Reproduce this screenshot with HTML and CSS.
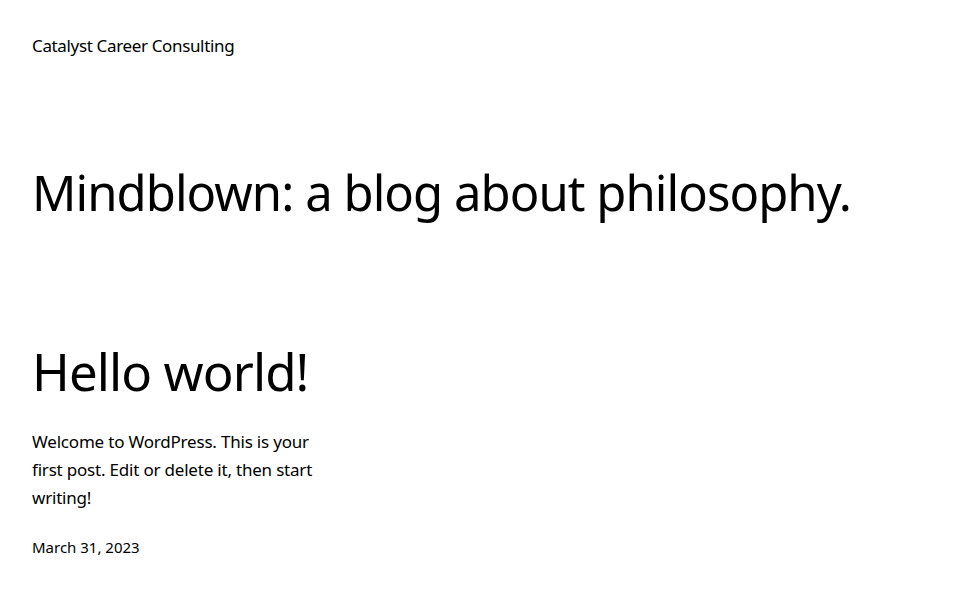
FILE: index.html
```html
<!DOCTYPE html>
<html lang="en">
<head>
<meta charset="utf-8">
<title>Catalyst Career Consulting</title>
<link rel="stylesheet" href="styles.css">
</head>
<body>
<header class="site-header">
  <p class="site-title">Catalyst Career Consulting</p>
</header>
<main class="content">
  <h1 class="page-title">Mindblown: a blog about philosophy.</h1>
  <div class="post-grid">
    <article class="post">
      <h2 class="post-title">Hello world!</h2>
      <p class="post-excerpt">Welcome to WordPress. This is your first post. Edit or delete it, then start writing!</p>
      <p class="post-date">March 31, 2023</p>
    </article>
    <div></div>
    <div></div>
  </div>
</main>
</body>
</html>
```
FILE: styles.css
```css
html, body {
  margin: 0;
  padding: 0;
  background: #ffffff;
  color: #000000;
  font-family: "Noto Sans", sans-serif;
}
.site-header {
  padding: 33px 32px 0;
}
.site-title {
  margin: 0;
  font-size: 17px;
  line-height: 26px;
  letter-spacing: -0.35px;
}
.content {
  padding: 0 32px;
}
.page-title {
  margin: 98px 0 0;
  font-weight: 400;
  font-size: 49px;
  line-height: 70px;
  letter-spacing: -0.95px;
}
.post-grid {
  display: grid;
  grid-template-columns: repeat(3, 1fr);
  gap: 16px;
  margin-top: 114px;
}
.post-title {
  margin: 0;
  font-weight: 400;
  font-size: 51px;
  line-height: 60px;
  letter-spacing: -0.9px;
}
.post-excerpt {
  margin: 27px 0 0;
  font-size: 17px;
  line-height: 28px;
  letter-spacing: -0.2px;
}
.post-date {
  margin: 24px 0 0;
  font-size: 15px;
  line-height: 22px;
}
```
